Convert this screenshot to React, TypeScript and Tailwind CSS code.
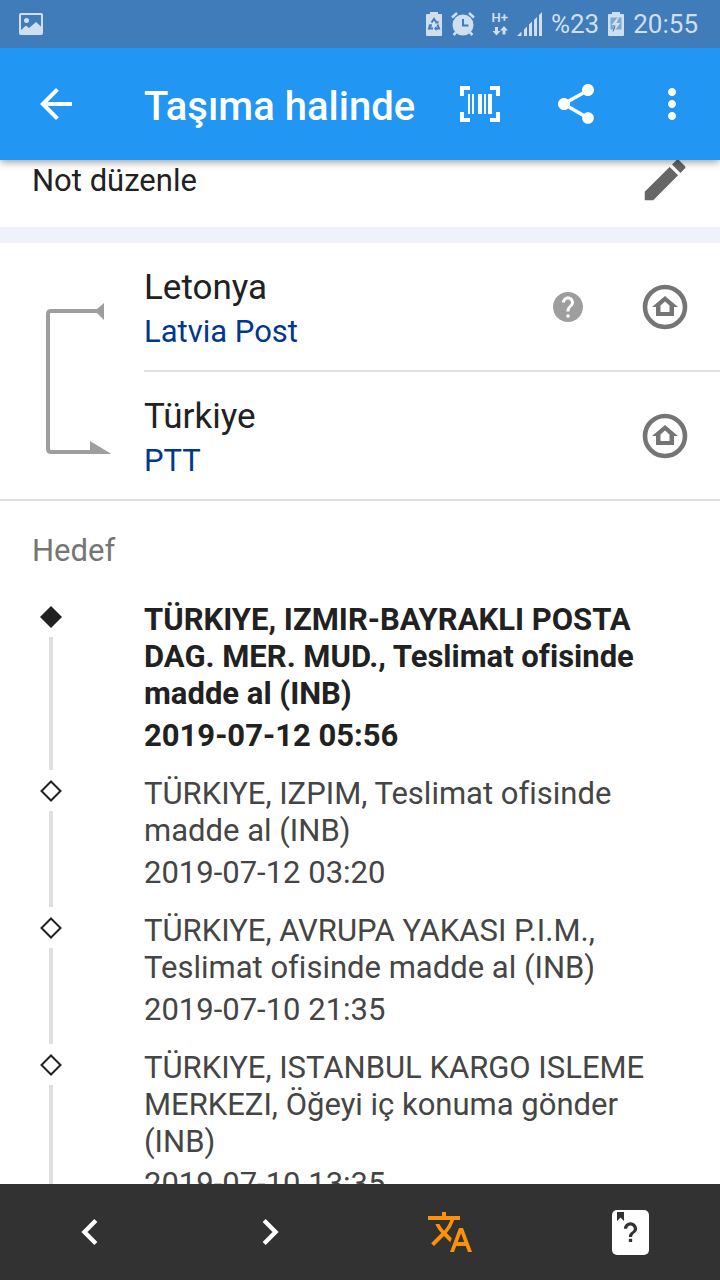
import React from 'react';
import { MdArrowBack, MdChevronLeft, MdChevronRight, MdCreate, MdHelp, MdMoreVert, MdShare, MdTranslate } from 'react-icons/md';

interface TrackEvent {
    place: string;
    date: string;
}

const events: TrackEvent[] = [
    { place: 'TÜRKIYE, IZMIR-BAYRAKLI POSTA DAG. MER. MUD., Teslimat ofisinde madde al (INB)', date: '2019-07-12 05:56' },
    { place: 'TÜRKIYE, IZPIM, Teslimat ofisinde madde al (INB)', date: '2019-07-12 03:20' },
    { place: 'TÜRKIYE, AVRUPA YAKASI P.I.M., Teslimat ofisinde madde al (INB)', date: '2019-07-10 21:35' },
    { place: 'TÜRKIYE, ISTANBUL KARGO ISLEME MERKEZI, Öğeyi iç konuma gönder (INB)', date: '2019-07-10 13:35' },
];

const StatusBar: React.FC = () => (
    <div className="flex h-12 items-center gap-[9px] bg-[#3f7cb9] pl-[19px] pr-[22px] text-[26px] leading-8 text-[#cfdff0]">
        <svg className="mr-auto h-[22px] w-6" viewBox="0 0 24 22" fill="none">
            <rect x="1" y="1" width="22" height="20" rx="1" stroke="currentColor" strokeWidth="2" />
            <circle cx="7.5" cy="7.5" r="2.5" fill="currentColor" />
            <path d="M1 18l6-5.500 3 2.500 7-6 6 5.500V21H1z" fill="currentColor" />
        </svg>
        <svg className="h-6 w-4" viewBox="0 0 16 24" fill="none">
            <path d="M4 0h8v2h3a1 1 0 011 1v20a1 1 0 01-1 1H1a1 1 0 01-1-1V3a1 1 0 011-1h3z" fill="currentColor" />
            <path d="M5.500 10.500L8 7l2.500 3.500M4.500 12.500L3 16.500h4M11.500 12.500l1.500 4H9" stroke="#3f7cb9" strokeWidth="2" />
            <path d="M9 11.500h3.500V8.500zM2 13l4-.8-.5 3zM10.500 14v5L8 16.500z" fill="#3f7cb9" />
        </svg>
        <svg className="h-6 w-6" viewBox="0 0 24 24" fill="none">
            <circle cx="12" cy="13" r="10.500" fill="currentColor" />
            <path d="M1 5.500L6 1M23 5.500L18 1M5 20.500L2.500 23M19 20.500l2.500 2.500" stroke="currentColor" strokeWidth="2.500" />
            <path d="M12 7v6.500h5.500" stroke="#3f7cb9" strokeWidth="2" />
        </svg>
        <div className="flex w-6 flex-col items-end">
            <span className="text-[13px] font-semibold leading-3">H+</span>
            <svg className="mt-[2px] h-[10px] w-4" viewBox="0 0 16 10" fill="currentColor">
                <path d="M3 1h3v4h2.500l-4 4.500L.5 5H3zM10.500 8.500h3v-4H16L12 0 8 4.500h2.500z" />
            </svg>
        </div>
        <svg className="h-6 w-[25px]" viewBox="0 0 25 24" fill="currentColor">
            <path d="M0 24l4.500-4.500V24zM7 17.500l3-3V24H7zM12 12.500l3-3V24h-3zM17 8l3-3v19h-3zM22 3l3-3v24h-3z" />
        </svg>
        <span>%23</span>
        <svg className="h-6 w-4" viewBox="0 0 16 24" fill="none">
            <path d="M4 0h8v2h3a1 1 0 011 1v20a1 1 0 01-1 1H1a1 1 0 01-1-1V3a1 1 0 011-1h3z" fill="currentColor" />
            <path d="M2.500 5.500h11v12h-11z" fill="#7fa7d0" />
            <path d="M9.500 5.500L3.500 13h4l-2 7L12.500 11h-4l2.500-5.500z" fill="currentColor" />
            <path d="M7 14.500l-2 5" stroke="#3f7cb9" />
        </svg>
        <time>20:55</time>
    </div>
);

const BarcodeIcon: React.FC = () => (
    <svg className="h-9 w-10" viewBox="0 0 40 36" fill="currentColor">
        <path d="M0 0h10v4H4v6H0zM30 0h10v10h-4V4h-6zM0 26h4v6h6v4H0zM36 26h4v10H30v-4h6z" />
        <path d="M8 8h2v20H8zM12 8h2v20h-2zM18 8h4v20h-4zM24 8h2v20h-2zM28 8h4v20h-4z" />
    </svg>
);

const HomeIcon: React.FC = () => (
    <svg className="h-[46px] w-[46px]" viewBox="0 0 46 46" fill="none">
        <circle cx="23" cy="23" r="20" stroke="currentColor" strokeWidth="4.6" />
        <path fillRule="evenodd" fill="currentColor" d="M23 12L36 23h-4v9H14v-9h-4zM23 17.500l-4.500 4V28h9v-6.500z" />
    </svg>
);

const RouteIcon: React.FC = () => (
    <svg className="h-[153px] w-[66px]" viewBox="0 0 66 153" fill="none">
        <path d="M53 9H5Q2 9 2 12V147Q2 150 5 150H50" stroke="currentColor" strokeWidth="4" />
        <path d="M58 1v17l-7-7V7zM44 139l21.500 13H44z" fill="currentColor" />
    </svg>
);

const GuideIcon: React.FC = () => (
    <svg className="h-[45px] w-[37px]" viewBox="0 0 37 45">
        <rect width="37" height="45" rx="5" fill="white" />
        <path d="M5 2h7v9l-3.500-3.500L5 11z" fill="#323232" />
        <path
            fill="#323232"
            transform="translate(-1.300 2.300) scale(1.650)"
            d="M11 18h2v-2h-2v2zm1-12c-2.210 0-4 1.790-4 4h2c0-1.100.9-2 2-2s2 .9 2 2c0 2-3 1.750-3 5h2c0-2.250 3-2.500 3-5 0-2.210-1.790-4-4-4z"
        />
    </svg>
);

interface CarrierProps {
    country: string;
    carrier: string;
    help?: boolean;
}

const CarrierRow: React.FC<CarrierProps> = ({ country, carrier, help }) => (
    <div className="box-content flex h-[127px] items-center">
        <div className="flex-1 pt-[7px]">
            <h2 className="text-[35px] leading-[44px] text-[#212121]">{country}</h2>
            <a href="#" className="block text-[31px] leading-[44px] text-[#00378f]">{carrier}</a>
        </div>
        {help && (
            <button aria-label="Yardım" className="text-[#9e9e9e]">
                <MdHelp className="h-9 w-9" />
            </button>
        )}
        <button aria-label="Web sitesi" className="ml-14 mr-8 text-[#757575]">
            <HomeIcon />
        </button>
    </div>
);

const App: React.FC = () => {
    return (
        <div className="flex h-screen flex-col bg-white font-[Roboto,sans-serif] [font-variant-ligatures:none]">
            <header className="relative z-10 shadow-[0_2px_8px_rgba(0,0,0,0.4)]">
                <StatusBar />
                <div className="flex h-28 items-center bg-[#2196f3] text-white">
                    <button aria-label="Geri" className="ml-8 mr-16">
                        <MdArrowBack className="h-12 w-12" />
                    </button>
                    <h1 className="flex-1 whitespace-nowrap pt-[6px] text-[40px] font-medium leading-[48px]">Taşıma halinde</h1>
                    <button aria-label="Barkod" className="flex w-24 justify-center">
                        <BarcodeIcon />
                    </button>
                    <button aria-label="Paylaş" className="flex w-24 justify-center">
                        <MdShare className="h-12 w-12" />
                    </button>
                    <button aria-label="Menü" className="flex w-24 justify-center">
                        <MdMoreVert className="h-12 w-12" />
                    </button>
                </div>
            </header>

            <main className="min-h-0 flex-1 overflow-hidden text-[31px] leading-[37px]">
                {/* Note row, partly scrolled under the toolbar */}
                <div className="-mt-7 flex h-[95px] items-center justify-between pl-8 pr-7">
                    <span className="pt-[2px] text-[#212121]">Not düzenle</span>
                    <button aria-label="Not düzenle" className="text-[#666666]">
                        <MdCreate className="h-[54px] w-[54px]" />
                    </button>
                </div>
                <div className="h-4 bg-[#eff2fb]" />

                {/* Carriers */}
                <section className="flex border-b-2 border-[#e0e0e0]">
                    <div className="w-36 pl-[46px] pt-[59px] text-[#9e9e9e]">
                        <RouteIcon />
                    </div>
                    <div className="flex-1 divide-y-2 divide-[#e0e0e0]">
                        <CarrierRow country="Letonya" carrier="Latvia Post" help />
                        <CarrierRow country="Türkiye" carrier="PTT" />
                    </div>
                </section>

                {/* Timeline */}
                <h3 className="pb-8 pl-8 pt-[31px] text-[#757575]">Hedef</h3>
                <ol>
                    {events.map((event, i) => (
                        <li key={event.date} className="flex">
                            <div className="flex w-36 shrink-0 pl-10">
                                <div className="flex w-[22px] flex-col items-center gap-[9px] py-[5px]">
                                    <svg className="h-[22px] w-[22px] shrink-0" viewBox="0 0 22 22">
                                        <path
                                            d={i === 0 ? 'M11 0l11 11-11 11L0 11z' : 'M11 1.500l9.500 9.500-9.500 9.500L1.500 11z'}
                                            fill={i === 0 ? '#212121' : 'none'}
                                            stroke={i === 0 ? 'none' : '#212121'}
                                            strokeWidth="2"
                                        />
                                    </svg>
                                    <div className="w-1 flex-1 bg-[#e0e0e0]" />
                                </div>
                            </div>
                            <div className={i === 0 ? 'flex-1 pb-[21px] pr-16 font-bold text-[#212121]' : 'flex-1 pb-[21px] pr-16 text-[#454545]'}>
                                <p>{event.place}</p>
                                <time className="mt-[5px] block">{event.date}</time>
                            </div>
                        </li>
                    ))}
                </ol>
            </main>

            <footer className="grid h-24 grid-cols-4 place-items-center bg-[#323232] text-white">
                <button aria-label="Önceki">
                    <MdChevronLeft className="h-[52px] w-[52px]" />
                </button>
                <button aria-label="Sonraki">
                    <MdChevronRight className="h-[52px] w-[52px]" />
                </button>
                <button aria-label="Çevir" className="text-[#ff9106]">
                    <MdTranslate className="h-12 w-12" />
                </button>
                <button aria-label="Kılavuz">
                    <GuideIcon />
                </button>
            </footer>
        </div>
    );
};

export default App;
